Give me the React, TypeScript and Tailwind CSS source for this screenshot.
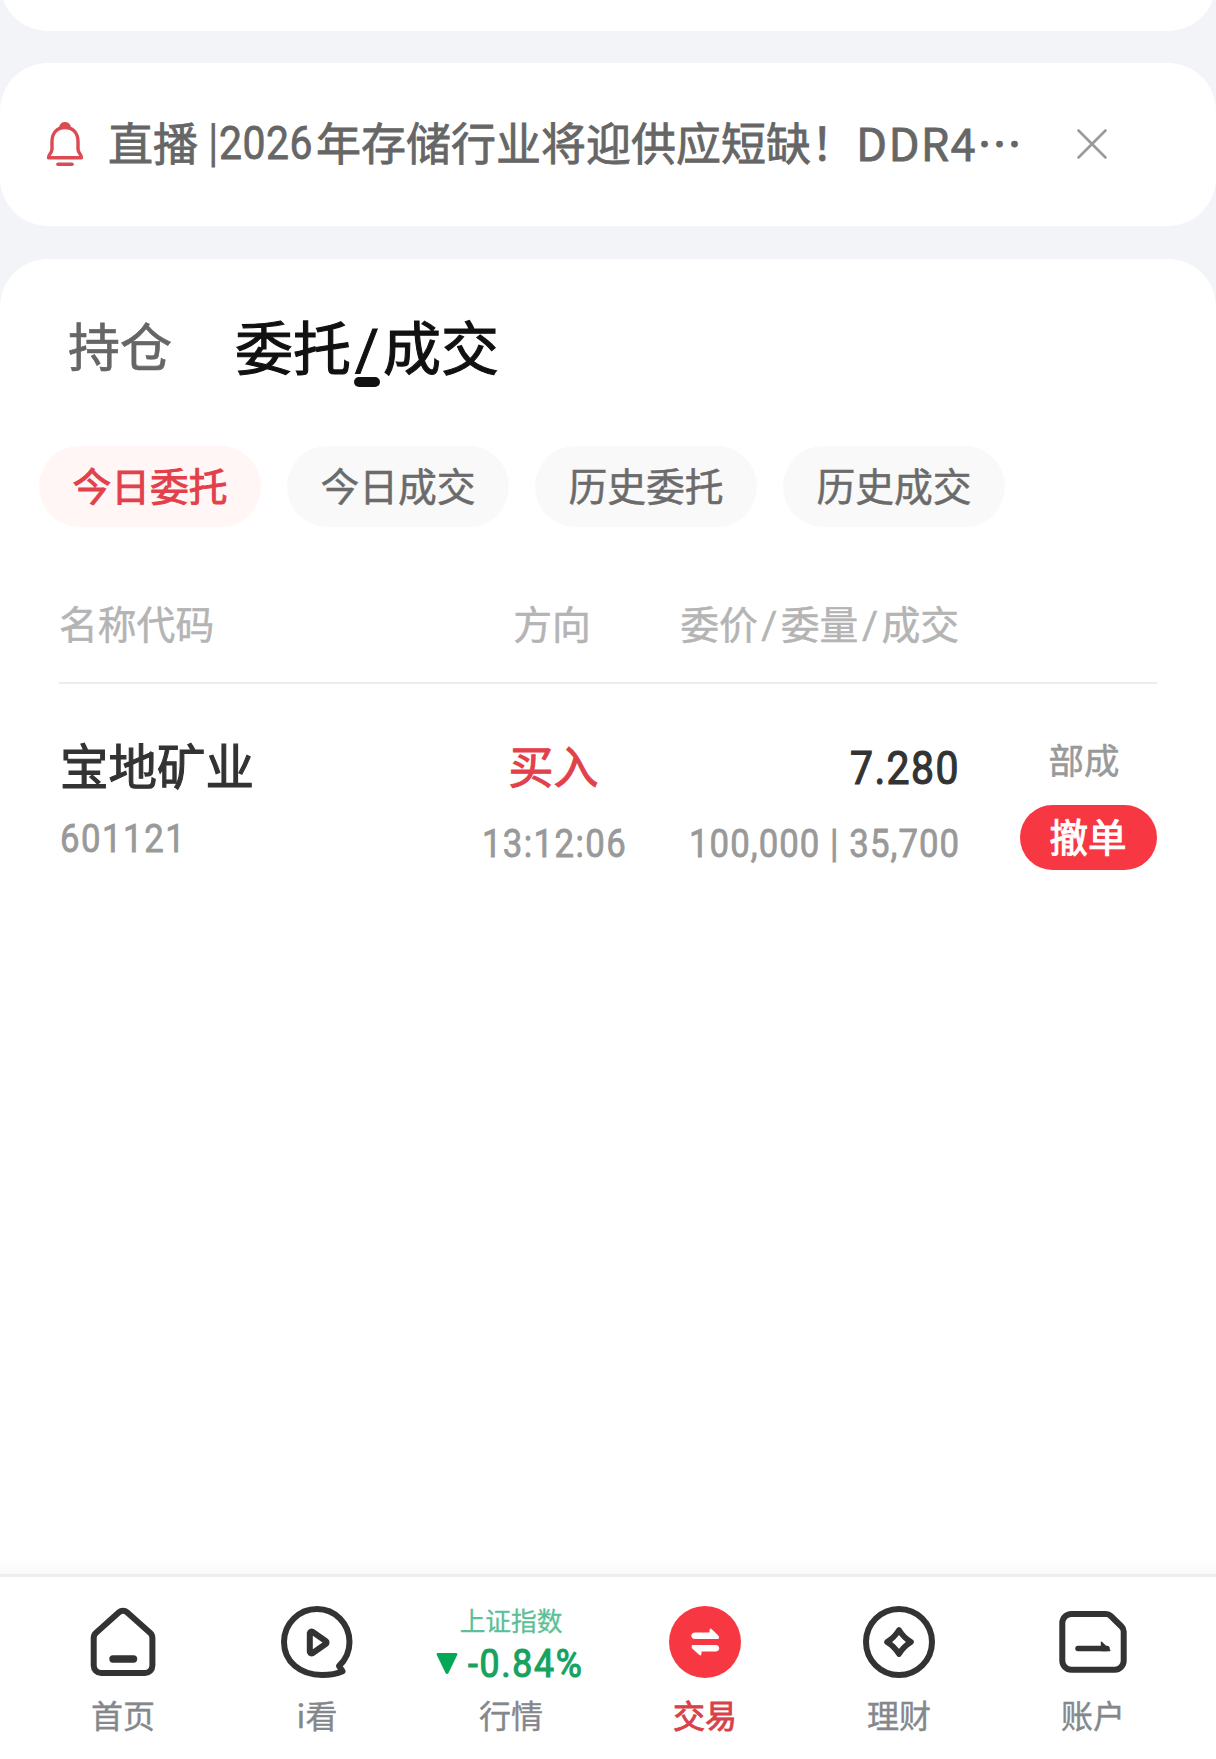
import type { ReactNode } from 'react'

interface Order {
  code: string
  name: string
  side: string
  time: string
  price: string
  volume: string
  filled: string
  status: string
}

const filters = ['今日委托', '今日成交', '历史委托', '历史成交']

const orders: Order[] = [
  {
    code: '601121',
    name: '宝地矿业',
    side: '买入',
    time: '13:12:06',
    price: '7.280',
    volume: '100,000',
    filled: '35,700',
    status: '部成',
  },
]

function BellIcon() {
  return (
    <svg width="38" height="46" viewBox="0 0 38 46" fill="none" stroke="#dc4a53" strokeWidth="3.4" strokeLinejoin="round" strokeLinecap="round">
      <path d="M14.8 6C15.4 3.600 17 2.600 19 2.600s3.600 1 4.200 3.400z" fill="#dc4a53" />
      <path d="M6 20.500C6 11.500 11.500 6.500 19 6.500S32 11.500 32 20.500v7.500c0 4.500 3.500 5 3.500 8.800h-33C2.500 33 6 32.500 6 28z" />
      <path d="M12 43.300h14" strokeWidth="3.600" />
    </svg>
  )
}

function CloseIcon() {
  return (
    <svg width="32" height="32" viewBox="0 0 32 32" fill="none" stroke="#999" strokeWidth="2.600" strokeLinecap="round">
      <path d="M2.500 2.500l27 27M29.500 2.500l-27 27" />
    </svg>
  )
}

function HomeIcon() {
  return (
    <svg width="72" height="72" viewBox="0 0 72 72" fill="none" stroke="#333" strokeWidth="6" strokeLinejoin="round" strokeLinecap="round">
      <path d="M32 6.300a6 6 0 0 1 8 0l23 20.500a7 7 0 0 1 2.400 5.200V59.500a7.500 7.500 0 0 1-7.500 7.500H14.200A7.500 7.500 0 0 1 6.700 59.500V32a7 7 0 0 1 2.400-5.200z" />
      <path d="M26 53h20.500" strokeWidth="7.400" />
    </svg>
  )
}

function WatchIcon() {
  return (
    <svg width="72" height="72" viewBox="0 0 72 72" fill="none" stroke="#333" strokeWidth="6" strokeLinejoin="round" strokeLinecap="round">
      <path d="M58 60C65 53.500 68.500 45.500 68.500 36 68.500 17.500 54 3 36 3S3 17.500 3 36c0 19.500 16 33 38 33 8.500 0 15-1.200 20.500-3.800z" />
      <path d="M28.800 27.200v18.600q.6 2.400 3 1.200L44.600 38q2-1.500 0-3L31.800 26q-2.400-1.200-3 1.200z" />
    </svg>
  )
}

function TradeIcon() {
  return (
    <svg width="72" height="72" viewBox="0 0 72 72">
      <circle cx="36" cy="36" r="36" fill="#f73842" />
      <g fill="#fff" stroke="#fff" strokeWidth="1" strokeLinejoin="round">
        <path d="M25.500 27h15.500v-3.500q.6-1 1.600 0l6.700 6.500v2.500H25.500a2.700 2.700 0 0 1 0-5.500z" />
        <path d="M47 45H32v3.500q-.6 1-1.600 0L23.200 42v-2.500H47a2.700 2.700 0 0 1 0 5.500z" />
      </g>
    </svg>
  )
}

function WealthIcon() {
  return (
    <svg width="72" height="72" viewBox="0 0 72 72" fill="none" stroke="#333" strokeWidth="6" strokeLinejoin="round">
      <circle cx="36" cy="36" r="33" />
      <path d="M36 24Q40.500 31.500 48 36 40.500 40.500 36 48 31.500 40.500 24 36 31.500 31.500 36 24z" strokeWidth="5.600" />
    </svg>
  )
}

function AccountIcon() {
  return (
    <svg width="72" height="72" viewBox="0 0 72 72" fill="none" stroke="#333" strokeWidth="6" strokeLinejoin="round" strokeLinecap="round">
      <path d="M14.300 8H49a7 7 0 0 1 4.800 2l10.700 10.500a7 7 0 0 1 2.200 5V54.700a9 9 0 0 1-9 9H14.300a9 9 0 0 1-9-9V17a9 9 0 0 1 9-9z" />
      <path d="M21 42.500h29" strokeWidth="5.500" />
      <path d="M44.500 36.200v8.300h8.300z" fill="#333" strokeWidth="1.400" />
    </svg>
  )
}

function NavItem({ label, active, children }: { label: string; active?: boolean; children: ReactNode }) {
  return (
    <div className="flex w-[194px] flex-col items-center">
      <div className="flex h-[72px] items-center justify-center">{children}</div>
      <span
        className={`mt-[18px] text-[32px] leading-[36px] ${
          active
            ? 'text-[#d9414a] [-webkit-text-stroke-width:0.9px]'
            : 'text-[#84878c] [-webkit-text-stroke-width:0.4px]'
        }`}
      >
        {label}
      </span>
    </div>
  )
}

function OrderRow({ order }: { order: Order }) {
  return (
    <div className="flex pt-[50px]">
      <div className="w-[380px] pl-px">
        <div className="text-[48.500px] leading-[60px] text-[#333] [-webkit-text-stroke-width:1.1px]">{order.name}</div>
        <div className="mt-[21px] origin-left scale-x-[.88] font-[Roboto] text-[39.500px] leading-[48px] tracking-[1.700px] text-[#999] [-webkit-text-stroke-width:0.8px]">
          {order.code}
        </div>
      </div>
      <div className="flex w-[229px] flex-col items-center">
        <div className="mt-px text-[45px] leading-[60px] text-[#e2404a] [-webkit-text-stroke-width:1px]">{order.side}</div>
        <div className="mt-[25px] ml-[2px] scale-x-[.88] font-[Roboto] text-[39.500px] leading-[48px] tracking-[1.600px] text-[#999] [-webkit-text-stroke-width:0.8px]">
          {order.time}
        </div>
      </div>
      <div className="flex w-[292px] flex-col items-end">
        <div className="mt-[4px] origin-right scale-x-[.88] font-[Roboto] text-[46.500px] leading-[60px] tracking-[1.600px] text-[#333] [-webkit-text-stroke-width:1.2px]">
          {order.price}
        </div>
        <div className="mt-[22px] origin-right scale-x-[.88] font-[Roboto] text-[39.500px] leading-[48px] tracking-[1.200px] whitespace-nowrap text-[#999] [-webkit-text-stroke-width:0.8px]">
          {order.volume} | {order.filled}
        </div>
      </div>
      <div className="ml-auto flex w-[137px] flex-col items-center">
        <span className="mr-[9px] text-[35.500px] leading-[50px] text-[#999] [-webkit-text-stroke-width:0.5px]">{order.status}</span>
        <button className="mt-[21px] h-[65px] w-[137px] rounded-full bg-[#f73842] pr-px pb-1 text-[38.500px] leading-[61px] text-white [-webkit-text-stroke-width:1px]">
          撤单
        </button>
      </div>
    </div>
  )
}

export default function App() {
  return (
    <div className="flex h-[1759px] w-[1216px] flex-col overflow-hidden bg-[#f3f4f8] font-['Noto_Sans_CJK_SC',sans-serif]">
      <div className="-mt-[69px] h-[100px] shrink-0 rounded-b-[48px] bg-white" />

      {/* Live notice */}
      <div className="mt-8 flex h-[163px] shrink-0 items-center rounded-[48px] bg-white pl-[46px]">
        <div className="pb-[2px]">
          <BellIcon />
        </div>
        <div className="ml-[24px] flex w-[919px] items-center pb-[6px] text-[45px] leading-[60px] whitespace-nowrap text-[#666] [-webkit-text-stroke-width:0.8px]">
          <span className="w-[100px]">直播</span>
          <span className="mb-[5px] w-[11px] text-[39px]">|</span>
          <span className="mt-[3px] w-[97px] origin-left scale-x-[.88] font-[Roboto] text-[46.500px] tracking-[.6px]">2026</span>
          <span>年存储行业将迎供应短缺！</span>
          <span className="tracking-[1.400px]">DDR4</span>
          <span className="mt-[2px]">…</span>
        </div>
        <div className="ml-[49px] pb-px">
          <CloseIcon />
        </div>
      </div>

      {/* Orders */}
      <div className="mt-[33px] flex flex-1 flex-col rounded-t-[48px] bg-white">
        <div className="flex h-[121px] items-center pt-[51px] pl-[68px] leading-[70px]">
          <span className="text-[52px] text-[#666] [-webkit-text-stroke-width:0.7px]">持仓</span>
          <div className="relative ml-[63px] h-[70px] text-[58px] whitespace-nowrap text-[#111] [-webkit-text-stroke-width:1.1px]">
            委托<span className="mx-[4px] font-[Roboto] leading-none">/</span>成交
            <span className="absolute top-[67px] left-1/2 h-[10px] w-[26px] -translate-x-1/2 rounded-full bg-[#111]" />
          </div>
        </div>

        <div className="mt-[66px] flex gap-[26px] pl-[39px]">
          {filters.map((f, i) => (
            <div
              key={f}
              className={`flex h-[81px] w-[222px] items-center justify-center rounded-full pb-[5px] text-[38.800px] ${
                i === 0
                  ? 'bg-[#fff6f5] text-[#e2404a] [-webkit-text-stroke-width:0.9px]'
                  : 'bg-[#f9f9f9] text-[#6b6b6b] [-webkit-text-stroke-width:0.5px]'
              }`}
            >
              {f}
            </div>
          ))}
        </div>

        <div className="mx-[59px]">
          <div className="flex h-[157px] border-b-2 border-[#ececec] pt-[70px] text-[38.800px] leading-[50px] text-[#b4b4b4] [-webkit-text-stroke-width:0.5px]">
            <span className="w-[380px]">名称代码</span>
            <span className="w-[226px] text-center">方向</span>
            <span className="w-[294px] text-right whitespace-nowrap">
              委价<span className="mx-[3.500px] font-[Roboto] leading-none">/</span>委量
              <span className="mx-[3.500px] font-[Roboto] leading-none">/</span>成交
            </span>
          </div>
          {orders.map((o) => (
            <OrderRow key={o.code} order={o} />
          ))}
        </div>

        <div className="mt-auto h-[14px] bg-linear-to-b from-white to-[#f9f9f9]" />
      </div>

      {/* Bottom navigation */}
      <div className="flex h-[185px] shrink-0 justify-center border-t-[3px] border-[#eee] bg-white pt-[29px]">
        <NavItem label="首页">
          <HomeIcon />
        </NavItem>
        <NavItem label="i看">
          <WatchIcon />
        </NavItem>
        <NavItem label="行情">
          <div className="flex flex-col items-center whitespace-nowrap">
            <span className="mt-[7px] text-[25.700px] leading-[30px] text-[#5cbf96] [-webkit-text-stroke-width:0.3px]">上证指数</span>
            <div className="mt-[7px] flex items-center text-[#17a35f]">
              <svg width="22" height="22" viewBox="0 0 22 22" fill="#05a857">
                <path d="M2 0h18q2 0 1.200 2L12.500 20q-1.500 2-3 0L.800 2Q0 0 2 0z" />
              </svg>
              <span className="ml-[10px] w-[118px] origin-left scale-x-[.9] font-[Roboto] text-[39.500px] leading-[44px] tracking-[1.900px] [-webkit-text-stroke-width:1.2px]">
                -0.84%
              </span>
            </div>
          </div>
        </NavItem>
        <NavItem label="交易" active>
          <TradeIcon />
        </NavItem>
        <NavItem label="理财">
          <WealthIcon />
        </NavItem>
        <NavItem label="账户">
          <AccountIcon />
        </NavItem>
      </div>
    </div>
  )
}
